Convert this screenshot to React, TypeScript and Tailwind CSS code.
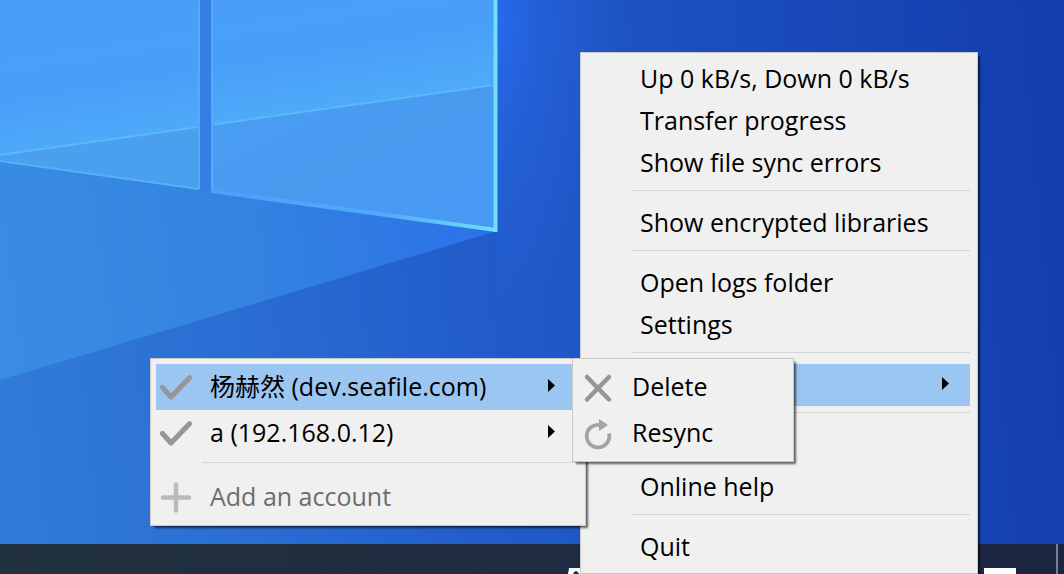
import React from "react";

type IconName = "check" | "plus" | "cross" | "reload";

function MenuIcon({ name }: { name: IconName }) {
  return (
    <svg viewBox="0 0 36 36" className="size-9 shrink-0" fill="none" stroke="#969696" strokeLinecap="round" strokeLinejoin="round" aria-hidden="true">
      {name === "check" && <path d="M4.500 18.500L13 28L31.500 8.800" strokeWidth="5.200" />}
      {name === "plus" && <path d="M18 5.500V31.500M5 18.500H31" stroke="#bbbbbb" strokeWidth="4.500" />}
      {name === "cross" && <path d="M7 8L29 30.500M29 8L7 30.500" strokeWidth="4.500" />}
      {name === "reload" && (
        <>
          <path d="M20 10A11.300 11.300 0 1 0 29 18.500" stroke="#a3a3a3" strokeWidth="3.800" strokeLinecap="butt" />
          <path d="M19 4L28 10L19 16Z" fill="#a3a3a3" stroke="none" />
        </>
      )}
    </svg>
  );
}

function Arrow() {
  return (
    <svg viewBox="0 0 7 13" className="mb-[3px] h-[13px] w-[7px] shrink-0" fill="#000" aria-hidden="true">
      <path d="M0 0L7 6.500L0 13Z" />
    </svg>
  );
}

const panel =
  "absolute border border-[#c8c8c8] bg-[#f0f0f0] py-[5px] pl-[5px] pr-[7px] shadow-[3px_3px_2px_-1px_rgba(0,0,0,0.6)]";

function Separator() {
  return <hr className="mt-1.5 mb-[11px] ml-[46px] h-px border-0 bg-[#d5d5d5]" />;
}

function TrayItem({ label, active, arrow }: { label?: string; active?: boolean; arrow?: boolean }) {
  return (
    <button
      type="button"
      role="menuitem"
      className={`flex h-[42px] w-full items-center justify-between pl-[54px] pr-[21px] text-left whitespace-nowrap ${active ? "bg-[#9cc6f2]" : ""}`}
    >
      <span>{label}</span>
      {arrow && <Arrow />}
    </button>
  );
}

function IconItem({ icon, label, active, arrow, muted }: { icon: IconName; label: string; active?: boolean; arrow?: boolean; muted?: boolean }) {
  return (
    <button
      type="button"
      role="menuitem"
      className={`flex h-[46px] w-full items-center pl-0.5 pr-[23px] text-left whitespace-nowrap ${active ? "bg-[#9cc6f2]" : ""} ${muted ? "text-[#6d6d6d]" : ""}`}
    >
      <MenuIcon name={icon} />
      <span className="ml-4 flex-1">{label}</span>
      {arrow && <Arrow />}
    </button>
  );
}

function Wallpaper() {
  return (
    <svg className="absolute inset-0 size-full" viewBox="0 0 1064 574" preserveAspectRatio="xMinYMin slice" aria-hidden="true">
      <defs>
        <linearGradient id="base" gradientUnits="userSpaceOnUse" x1="0" y1="400" x2="1064" y2="300">
          <stop offset="0" stopColor="#307cd8" />
          <stop offset="0.2" stopColor="#2b6fd4" />
          <stop offset="0.5" stopColor="#2059c8" />
          <stop offset="0.75" stopColor="#1a4bba" />
          <stop offset="1" stopColor="#143eae" />
        </linearGradient>
        <linearGradient id="beam" gradientUnits="userSpaceOnUse" x1="0" y1="300" x2="490" y2="230">
          <stop offset="0" stopColor="#398ce2" />
          <stop offset="0.5" stopColor="#3483e0" />
          <stop offset="1" stopColor="#2b72e8" />
        </linearGradient>
        <radialGradient id="glow" gradientUnits="userSpaceOnUse" cx="0" cy="0" r="1" gradientTransform="translate(490 20) scale(130 300)">
          <stop offset="0" stopColor="#286cf0" />
          <stop offset="0.4" stopColor="#2764e0" stopOpacity="0.6" />
          <stop offset="1" stopColor="#2764e0" stopOpacity="0" />
        </radialGradient>
        <linearGradient id="upper" gradientUnits="userSpaceOnUse" x1="230" y1="0" x2="250" y2="125">
          <stop offset="0" stopColor="#4a9ef8" />
          <stop offset="0.5" stopColor="#499ff8" />
          <stop offset="1" stopColor="#4fabf8" />
        </linearGradient>
        <linearGradient id="lower" x1="0" x2="1" y1="0" y2="1">
          <stop offset="0" stopColor="#4a9ff6" />
          <stop offset="0.5" stopColor="#489aef" />
          <stop offset="1" stopColor="#4899f6" />
        </linearGradient>
        <linearGradient id="edge" gradientUnits="userSpaceOnUse" x1="212" y1="0" x2="497" y2="0">
          <stop offset="0" stopColor="#4aa0fa" />
          <stop offset="0.6" stopColor="#51aafb" />
          <stop offset="1" stopColor="#70defb" />
        </linearGradient>
      </defs>
      <path d="M0 0H1064V574H0Z" fill="url(#base)" />
      <path d="M497 0H700V340H497Z" fill="url(#glow)" />
      <path d="M0 0H497V231L0 380Z" fill="url(#beam)" />
      <path d="M199 0H212V192H199Z" fill="#347fe4" />
      <path d="M0 0H200V127L0 156Z" fill="url(#upper)" />
      <path d="M0 156L200 127V189L0 161Z" fill="#4a9fee" />
      <path d="M211 0H496V84L211 125Z" fill="url(#upper)" />
      <path d="M211 125L496 84V231L211 191Z" fill="url(#lower)" />
      <path d="M0 155L198 127M214 124.500L494 85" stroke="#5ab9fa" strokeWidth="2" />
      <path d="M0 161L199 189" stroke="#52b2fa" strokeWidth="2" />
      <path d="M199 0V189M212 0V191" stroke="#56abf8" strokeWidth="2" />
      <path d="M211 191L496 230" stroke="url(#edge)" strokeWidth="4" />
      <path d="M495.500 0V232" stroke="#70dff8" strokeWidth="4" />
    </svg>
  );
}

export default function App() {
  return (
    <div className="relative flex h-screen flex-col justify-end overflow-hidden font-['Open_Sans','Noto_Sans_CJK_SC',sans-serif] text-[25px] text-black">
      <Wallpaper />
      <footer className="relative flex h-[30px] items-end justify-end bg-linear-to-r from-[#22313f] to-[#1b2540]">
        <svg viewBox="0 0 14 6" className="mr-[402px] h-1.5 w-3.5" aria-hidden="true">
          <path d="M1 0H14V6H11Q8 0 5 6H0Z" fill="#fff" />
        </svg>
        <span className="mr-10 h-1.5 w-8 bg-white" />
        <span className="mr-1.5 h-full w-0.5 bg-[#7a8090]" />
      </footer>

      <div role="menu" className={`${panel} top-[52px] left-[580px] w-[398px]`}>
        <TrayItem label="Up 0 kB/s, Down 0 kB/s" />
        <TrayItem label="Transfer progress" />
        <TrayItem label="Show file sync errors" />
        <Separator />
        <TrayItem label="Show encrypted libraries" />
        <Separator />
        <TrayItem label="Open logs folder" />
        <TrayItem label="Settings" />
        <Separator />
        <TrayItem active arrow />
        <Separator />
        <TrayItem />
        <TrayItem label="Online help" />
        <Separator />
        <TrayItem label="Quit" />
      </div>

      <div role="menu" className={`${panel} top-[358px] left-[150px] w-[436px]`}>
        <IconItem icon="check" label="杨赫然 (dev.seafile.com)" active arrow />
        <IconItem icon="check" label="a (192.168.0.12)" arrow />
        <Separator />
        <IconItem icon="plus" label="Add an account" muted />
      </div>

      <div role="menu" className={`${panel} top-[358px] left-[572px] w-[222px]`}>
        <IconItem icon="cross" label="Delete" />
        <IconItem icon="reload" label="Resync" />
      </div>
    </div>
  );
}
